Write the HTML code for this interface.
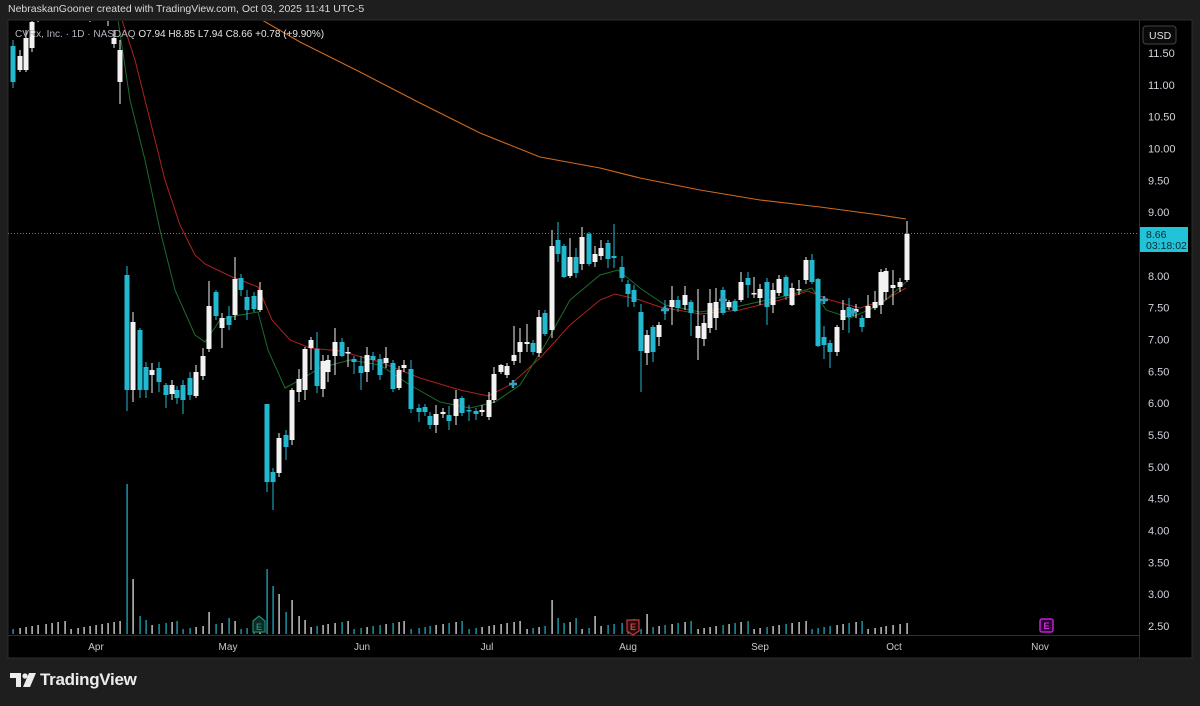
<!DOCTYPE html>
<html><head><meta charset="utf-8">
<style>
html,body{margin:0;padding:0;background:#1e1e1e;width:1200px;height:706px;overflow:hidden;font-family:"Liberation Sans",sans-serif}
#hdr{position:absolute;left:8px;top:3px;font-size:10.5px;color:#d8d8d8;}
#chart{position:absolute;left:0;top:0}
#logo{position:absolute;left:10px;top:670px;display:flex;align-items:center;color:#ececec;font-size:17px;font-weight:bold;letter-spacing:-0.3px}
</style></head><body>
<div id="hdr">NebraskanGooner created with TradingView.com, Oct 03, 2025 11:41 UTC-5</div>
<svg id="chart" width="1200" height="706" xmlns="http://www.w3.org/2000/svg">
<defs><clipPath id="cp"><rect x="8" y="21" width="1131" height="614"/></clipPath></defs>
<rect x="8" y="20" width="1184" height="638" fill="#000" stroke="#2e2e2e" stroke-width="1"/>
<line x1="1139.5" y1="20" x2="1139.5" y2="658" stroke="#2e2e2e"/>
<line x1="8" y1="635.5" x2="1139" y2="635.5" stroke="#2e2e2e"/>
<g id="g" clip-path="url(#cp)"></g>
<line x1="8" y1="233.5" x2="1139" y2="233.5" stroke="#22c2d8" stroke-dasharray="1 2" stroke-width="1" opacity="0.8"/>
<g font-family="Liberation Sans,sans-serif" font-size="11" fill="#d1d4dc" id="axis"></g>
<rect x="1143" y="26" width="33" height="18" rx="3" fill="#0a0a0a" stroke="#444"/>
<text x="1149" y="39" font-family="Liberation Sans,sans-serif" font-size="10.5" fill="#e0e0e0">USD</text>
<rect x="1140" y="227" width="48" height="25" fill="#22c2d8"/>
<text x="1146" y="238" font-family="Liberation Sans,sans-serif" font-size="10.5" fill="#0a2a30">8.66</text>
<text x="1146" y="249" font-family="Liberation Sans,sans-serif" font-size="10.5" fill="#0a2a30">03:18:02</text>
<text x="15" y="37" font-family="Liberation Sans,sans-serif" font-size="10" fill="#b2b5be">CVRx, Inc. · 1D · NASDAQ  <tspan fill="#e6e6e6">O7.94  H8.85  L7.94  C8.66  +0.78 (+9.90%)</tspan></text>
<g font-family="Liberation Sans,sans-serif" font-size="10" fill="#c8c8c8" text-anchor="middle">
<text x="96" y="650">Apr</text><text x="228" y="650">May</text><text x="362" y="650">Jun</text><text x="487" y="650">Jul</text><text x="628" y="650">Aug</text><text x="760" y="650">Sep</text><text x="894" y="650">Oct</text><text x="1040" y="650">Nov</text>
</g>
<g font-family="Liberation Sans,sans-serif" font-size="9" font-weight="bold" text-anchor="middle">
<path d="M253 621 L259 616 L265 621 L265 632 L253 632 Z" fill="#0b2a24" stroke="#1e8a72" stroke-width="1.2"/><text x="259" y="630" fill="#1e8a72">E</text>
<path d="M627 620 L639 620 L639 631 L633 635 L627 631 Z" fill="#2a0b0b" stroke="#c23a3a" stroke-width="1.2"/><text x="633" y="630" fill="#d04040">E</text>
<rect x="1040" y="619" width="13" height="13" rx="2" fill="#2a0530" stroke="#c020d0" stroke-width="1.5"/><text x="1046.5" y="629" fill="#d030e0">E</text>
</g>
</svg>
<div id="logo"><svg width="26" height="14" viewBox="0 0 26 14"><path d="M0 0H11V14H6V5H0Z" fill="#ececec"/><circle cx="15" cy="3" r="2.6" fill="#ececec"/><path d="M19 0H26L20 14H13Z" fill="#ececec"/></svg><span style="margin-left:4px">TradingView</span></div>
<script>
var NS="http://www.w3.org/2000/svg",g=document.getElementById('g');
function el(t,a){var e=document.createElementNS(NS,t);for(var k in a)e.setAttribute(k,a[k]);g.appendChild(e);return e;}
var ax=document.getElementById('axis');
for(var i=0;i<=18;i++){var p=11.5-i*0.5;if(i==6)continue;var t=document.createElementNS(NS,'text');t.setAttribute('x',1148);t.setAttribute('y',57+i*31.83);t.textContent=p.toFixed(2);ax.appendChild(t);}
var TEAL="#22b8d0",WH="#f2f2f2";
function vol(x,h,c){el('rect',{x:x-0.6,y:634-h,width:1.4,height:h,fill:c,opacity:0.85});}
function pl(pts,col,w){el('polyline',{points:pts.map(function(p){return p.join(',')}).join(' '),fill:'none',stroke:col,'stroke-width':w});}
pl([[262,20],[300,42],[360,72],[420,103],[480,133],[540,157],[600,168],[640,178],[700,190],[760,200],[820,207],[880,215],[906,219]],"#d2691e",1.1);
pl([[122,20],[135,60],[150,120],[165,180],[180,225],[195,255],[205,264],[230,276],[258,287],[272,320],[290,340],[310,348],[340,351],[380,362],[420,378],[460,390],[488,396],[510,385],[540,358],[570,325],[600,300],[615,294],[640,300],[660,307],[700,314],[740,310],[780,300],[808,291],[830,300],[860,308],[885,300],[906,288]],"#b02020",1);
pl([[118,20],[130,100],[145,160],[160,230],[175,290],[195,335],[205,342],[220,320],[240,315],[258,312],[268,350],[285,388],[300,380],[320,368],[350,360],[380,365],[410,385],[440,402],[470,408],[495,402],[520,385],[545,345],[570,300],[600,275],[618,270],[640,288],[665,305],[700,312],[740,306],[790,295],[812,288],[826,310],[850,318],[880,305],[906,282]],"#1e6b2a",1);
var C=[[13,46,82,40,88],[20,70,56,50,72],[26,70,38,30,72],[32,48,22,14,52],[38,16,10,5,22],[46,12,8,4,20],[52,14,8,4,19],[58,12,6,3,18],[65,10,5,2,16],[71,10,6,2,18],[78,12,8,3,20],[84,10,6,2,16],[90,14,8,4,22],[96,12,8,2,20],[102,10,6,2,18],[108,20,12,4,26],[114,44,38,30,48],[120,82,50,40,104],
[127,275,390,266,411],[133,390,322,312,402],[140,330,390,328,398],[146,367,390,362,398],[152,375,370,363,393],[159,368,382,362,392],[166,385,395,383,408],[172,394,385,380,400],[177,390,398,386,404],[183,385,400,380,414],[190,378,395,372,400],[196,396,372,365,398],[203,376,356,348,380],[209,349,306,281,352],[216,292,316,290,320],[222,328,318,313,348],[229,316,325,306,330],[235,315,279,257,320],[241,278,290,274,296],[247,297,310,290,320],[254,296,309,292,312],[260,310,290,282,312],
[267,404,482,404,492],[273,472,482,468,510],[279,473,438,433,477],[286,435,447,430,460],[292,440,390,388,445],[299,392,379,369,402],[305,390,349,347,400],[311,348,340,337,370],[317,349,386,332,393],[323,389,361,355,397],[328,372,360,355,382],[335,356,342,328,375],[342,342,356,338,357],[348,353,352,347,367],[354,359,362,356,374],[361,366,373,356,390],[367,372,355,347,382],[373,356,360,352,370],[380,359,375,354,380],[386,363,358,347,368],[393,363,389,360,392],[399,388,370,366,390],[404,368,365,360,372],[411,369,409,360,413],[419,408,412,404,422],[425,407,412,404,416],[430,416,425,412,429],[436,425,414,405,433],[443,414,412,408,418],[449,415,421,406,430],[456,416,399,390,425],[462,398,413,396,416],[469,410,411,405,421],[476,411,414,408,420],[482,412,410,405,416],[489,417,400,392,420],[494,400,374,367,403],[501,372,365,364,374],[507,375,366,363,378],[514,361,355,326,365],[520,352,342,328,363],[527,344,342,324,352],[533,343,352,340,355],[539,353,317,310,357],[545,313,334,310,336],[552,330,246,230,338],[558,240,254,222,262],[564,246,277,244,278],[570,276,257,238,278],[576,257,273,248,278],[582,264,237,227,270],[589,234,264,232,266],[595,262,254,246,267],[601,256,248,240,260],[608,243,259,240,268],[614,256,258,224,268],
[622,267,278,256,282],[628,284,294,280,307],[634,290,302,285,307],[641,312,351,304,392],[647,353,335,330,365],[653,327,352,325,362],[659,337,325,322,346],[665,308,311,300,320],[672,307,300,286,325],[678,300,308,296,312],[685,305,295,286,310],[691,302,313,300,336],[698,338,326,289,360],[704,339,323,315,346],[710,328,303,289,333],[716,318,302,288,330],[723,290,313,287,315],[729,307,302,300,310],[735,301,311,299,312],[741,300,282,272,302],[748,278,285,272,298],[754,294,293,277,298],[760,298,289,284,305],[767,282,307,278,325],[773,305,290,283,313],[779,293,279,275,296],[786,277,296,275,300],[792,305,288,283,306],[799,290,289,280,295],[806,280,260,257,284],[812,260,282,254,284],[818,279,346,278,347],[824,337,345,326,359],[830,343,352,340,368],[837,352,327,325,356],[843,320,310,300,330],[849,307,317,298,333],[856,312,309,304,318],[862,318,327,315,332],[868,318,306,295,318],[875,308,302,291,310],[881,305,272,269,314],[886,292,271,268,300],[893,288,285,270,305],[900,287,282,278,292],[907,280,234,221,282]];
var spikes={127:150,133:55,140:18,146:14,209:22,229:16,267:65,273:48,279:40,286:22,292:34,299:18,305:14,552:34,558:16,576:16,595:18,634:15,647:20,706:14,820:12};
C.forEach(function(c,i){var x=c[0],up=c[2]<c[1],col=up?WH:TEAL;
 var top=Math.min(c[1],c[2]),bot=Math.max(c[1],c[2]);
 el('line',{x1:x,y1:c[3],x2:x,y2:c[4],stroke:col,'stroke-width':1});
 el('rect',{x:x-2.5,y:top,width:5,height:Math.max(1.5,bot-top),fill:col});
 var h=spikes[x]||(5+((i*37)%9));vol(x,h,col);
});
[[513,384],[665,310],[723,300],[853,312],[824,300]].forEach(function(p){el('path',{d:'M'+(p[0]-4)+' '+p[1]+'H'+(p[0]+4)+'M'+p[0]+' '+(p[1]-4)+'V'+(p[1]+4),stroke:'#3aa0c0','stroke-width':2.5});});
</script>
</body></html>
